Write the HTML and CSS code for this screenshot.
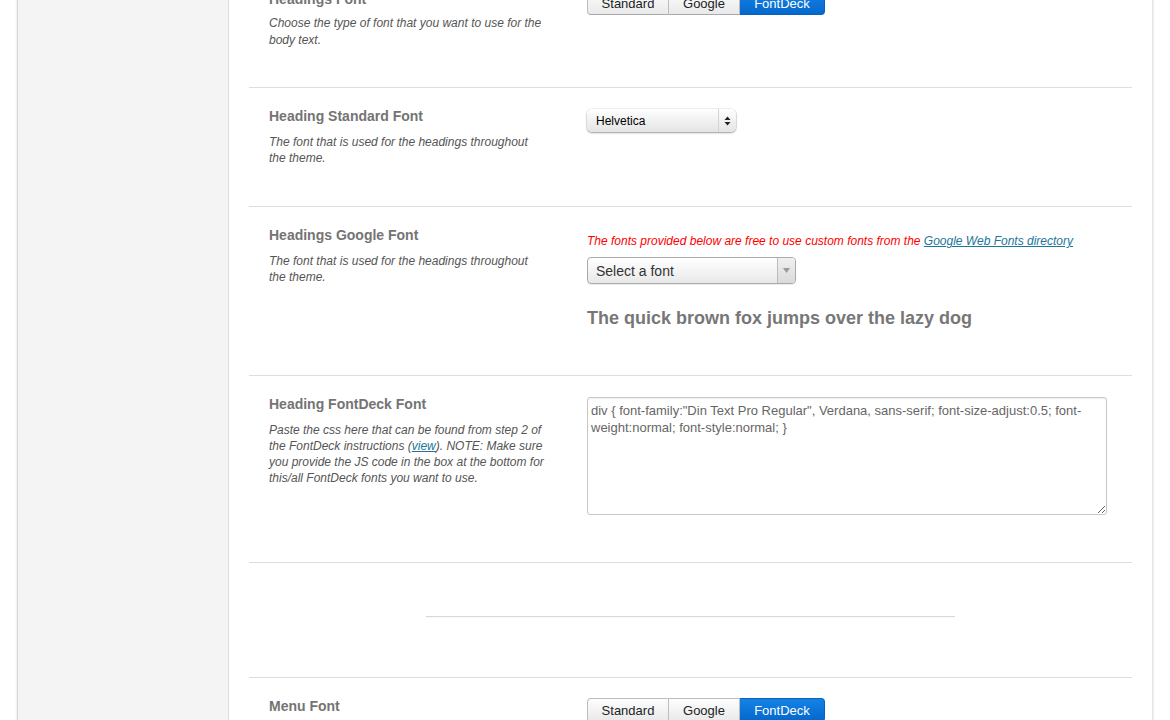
FILE: index.html
```html
<!DOCTYPE html>
<html>
<head>
<meta charset="utf-8">
<link rel="stylesheet" href="styles.css">
</head>
<body>
<div class="frame">
  <aside class="sidebar"></aside>
  <main class="main">
    <section class="row row-first">
      <div class="label">
        <h3>Headings Font</h3>
        <p>Choose the type of font that you want to use for the body text.</p>
      </div>
      <div class="control">
        <div class="seg">
          <span class="seg-btn seg-std">Standard</span>
          <span class="seg-btn seg-goo">Google</span>
          <span class="seg-btn seg-fd active">FontDeck</span>
        </div>
      </div>
    </section>

    <section class="row row-std">
      <div class="label">
        <h3>Heading Standard Font</h3>
        <p>The font that is used for the headings throughout the theme.</p>
      </div>
      <div class="control">
        <div class="mac-select">
          <span class="mac-select-text">Helvetica</span>
          <span class="mac-select-arrows">
            <svg width="7" height="10" viewBox="0 0 7 10"><path d="M0.5 4 L3.5 0.5 L6.5 4 Z M0.5 6 L3.5 9.5 L6.5 6 Z" fill="#222"/></svg>
          </span>
        </div>
      </div>
    </section>

    <section class="row row-google">
      <div class="label">
        <h3>Headings Google Font</h3>
        <p>The font that is used for the headings throughout the theme.</p>
      </div>
      <div class="control">
        <p class="notice">The fonts provided below are free to use custom fonts from the <a href="#">Google Web Fonts directory</a></p>
        <div class="chosen">
          <span class="chosen-text">Select a font</span>
          <span class="chosen-arrow">
            <svg width="7" height="5" viewBox="0 0 7 5"><path d="M0 0 L7 0 L3.5 5 Z" fill="#999"/></svg>
          </span>
        </div>
        <div class="sample">The quick brown fox jumps over the lazy dog</div>
      </div>
    </section>

    <section class="row row-fd">
      <div class="label">
        <h3>Heading FontDeck Font</h3>
        <p>Paste the css here that can be found from step 2 of the FontDeck instructions (<a href="#">view</a>). NOTE: Make sure you provide the JS code in the box at the bottom for this/all FontDeck fonts you want to use.</p>
      </div>
      <div class="control">
        <textarea class="css-box">div { font-family:"Din Text Pro Regular", Verdana, sans-serif; font-size-adjust:0.5; font-weight:normal; font-style:normal; }</textarea>
      </div>
    </section>

    <section class="row row-divider">
      <div class="hr"></div>
    </section>

    <section class="row row-menu">
      <div class="label">
        <h3>Menu Font</h3>
      </div>
      <div class="control">
        <div class="seg">
          <span class="seg-btn seg-std">Standard</span>
          <span class="seg-btn seg-goo">Google</span>
          <span class="seg-btn seg-fd active">FontDeck</span>
        </div>
      </div>
    </section>
  </main>
</div>
</body>
</html>
```

FILE: styles.css
```css
* { box-sizing: border-box; }
html, body { margin: 0; padding: 0; background: #fff; overflow: hidden; }
body {
  font-family: "Liberation Sans", Arial, Helvetica, sans-serif;
  height: 720px;
}
.frame {
  display: flex;
  margin-left: 18px;
  width: 1134px;
  margin-top: -30px;
  min-height: 900px;
  box-shadow: 0 0 3px rgba(0,0,0,0.28), -9px 0 0 -8px #f2f2f2;
  background: #fff;
}
.sidebar {
  width: 211px;
  flex: none;
  background: #f4f4f4;
  border-right: 1px solid #dcdcdc;
}
.main {
  flex: 1;
  padding: 0 20px;
}
.row {
  display: flex;
  border-bottom: 1px solid #dedede;
  padding: 20px 20px 0 20px;
}
.label {
  width: 298px;
  flex: none;
  margin-right: 20px;
}
.label h3 {
  margin: 0;
  font-size: 14px;
  line-height: 16px;
  font-weight: bold;
  color: #747474;
}
.label p {
  margin: 10px 0 0;
  font-size: 12px;
  line-height: 16px;
  font-style: italic;
  color: #555;
  width: 276px;
}
.row-first { padding-top: 21px; }
.row-first .label p { margin-top: 8px; line-height: 16.5px; }
.label p a { color: #21759b; }
.control { flex: 1; }

.row-first { height: 118px; }
.row-std { height: 119px; }
.row-google { height: 169px; }
.row-fd { height: 187px; }
.row-divider { height: 115px; padding: 53px 0 0; justify-content: center; }
.row-menu { height: 80px; }

.seg { display: flex; height: 24px; }
.seg-btn {
  display: flex;
  align-items: center;
  justify-content: center;
  font-size: 13px;
  color: #222;
  background: linear-gradient(#fdfdfd, #e9e9e9);
  border: 1px solid #bdbdbd;
  border-bottom-color: #a9a9a9;
}
.seg-std { width: 82px; border-radius: 4px 0 0 4px; }
.seg-goo { width: 71px; border-left: none; }
.seg-fd { width: 85px; border-radius: 0 4px 4px 0; border-left: none; }
.seg-btn.active {
  background: linear-gradient(#1582e6, #0567cc);
  border-color: #0a62c0;
  color: #fff;
}

.mac-select {
  display: flex;
  width: 149px;
  height: 23px;
  margin-top: 1px;
  border-radius: 5px;
  background: linear-gradient(#ffffff, #f1f1f1 50%, #e4e4e4);
  box-shadow: 0 1px 2px rgba(0,0,0,0.35), 0 0 0 0.5px rgba(0,0,0,0.12);
  font-size: 12px;
  color: #000;
  align-items: center;
}
.mac-select-text { flex: 1; padding-left: 9px; }
.mac-select-arrows {
  width: 18px;
  height: 100%;
  display: flex;
  align-items: center;
  justify-content: center;
  border-left: 1px solid #d4d4d4;
}

.notice {
  margin: 7px 0 0;
  font-size: 12px;
  line-height: 14px;
  font-style: italic;
  color: #f00;
}
.notice a { color: #21759b; }
.chosen {
  display: flex;
  width: 209px;
  height: 27px;
  margin-top: 9px;
  border: 1px solid #aaa;
  border-radius: 4px;
  background: linear-gradient(#ffffff, #f4f4f4 50%, #e8e8e8);
  box-shadow: 0 1px 1px rgba(0,0,0,0.08);
  align-items: center;
  font-size: 14px;
  color: #333;
}
.chosen-text { flex: 1; padding-left: 8px; }
.chosen-arrow {
  width: 18px;
  height: 100%;
  display: flex;
  align-items: center;
  justify-content: center;
  border-left: 1px solid #bbb;
  background: linear-gradient(#f0f0f0, #dadada);
  border-radius: 0 3px 3px 0;
}
.sample {
  margin-top: 24px;
  font-size: 18px;
  font-weight: bold;
  color: #777;
}

.css-box {
  display: block;
  width: 520px;
  height: 118px;
  margin: 1px 0 0;
  border: 1px solid #c8c8c8;
  border-radius: 3px;
  padding: 4px 3px;
  font-family: "Liberation Sans", Arial, sans-serif;
  font-size: 13px;
  line-height: 17px;
  color: #666;
  box-shadow: inset 0 1px 2px rgba(0,0,0,0.07);
  resize: both;
  outline: none;
  overflow: hidden;
}

.hr {
  width: 529px;
  height: 2px;
  border-top: 1px solid #d8d8d8;
  border-bottom: 1px solid #fafafa;
}
```
